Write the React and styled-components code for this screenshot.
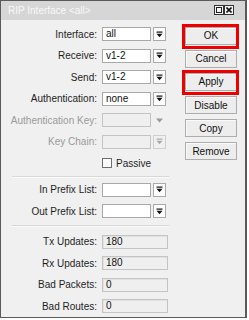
import React from 'react';
import styled, { createGlobalStyle } from 'styled-components';

const GlobalStyle = createGlobalStyle`
  html, body {
    margin: 0;
    padding: 0;
    background: #ffffff;
  }
  body {
    font-family: "Liberation Sans", Arial, sans-serif;
  }
`;

const Window = styled.div`
  width: 244px;
  height: 316px;
  border: 1px solid #5a5a5a;
  border-right-width: 2px;
  background: #f0f0f0;
  display: flex;
  flex-direction: column;
`;

const TitleBar = styled.div`
  height: 19px;
  background: #d6d6d6;
  display: flex;
  align-items: center;
  padding: 0 11px 0 7px;
  color: #f8f8f8;
  font-size: 10px;
`;

const TitleText = styled.span`
  flex: 1;
`;

const TitleButton = styled.div`
  width: 8px;
  height: 8px;
  border: 1px solid #333;
  background: #f4f4f4;
  display: flex;
  align-items: center;
  justify-content: center;
`;

const Body = styled.div`
  display: flex;
  flex: 1;
`;

const Form = styled.div`
  width: 184px;
  padding-top: 4px;
  display: flex;
  flex-direction: column;
`;

const Row = styled.div`
  height: 21.5px;
  display: flex;
  align-items: center;
`;

const Label = styled.div`
  width: 96px;
  text-align: right;
  font-size: 10px;
  color: ${p => (p.disabled ? '#9a9a9a' : '#1e1e1e')};
  margin-right: 5px;
  white-space: nowrap;
`;

const Field = styled.div`
  box-sizing: border-box;
  width: ${p => (p.wide ? '66px' : '49px')};
  height: 14px;
  border: 1px solid ${p => (p.readOnly || p.disabled ? '#c4c4c4' : '#a8a8a8')};
  background: ${p => (p.readOnly || p.disabled ? '#efefef' : '#ffffff')};
  box-shadow: ${p => (p.readOnly ? 'inset 1px 1px 0 #e2e2e2' : 'none')};
  font-size: 10px;
  line-height: 12px;
  padding-left: 3px;
  color: #111;
`;

const DropButton = styled.div`
  box-sizing: border-box;
  width: 13px;
  height: 14px;
  margin-left: 2px;
  border: 1px solid ${p => (p.disabled ? '#cfcfcf' : '#a9a9a9')};
  background: ${p => (p.disabled ? '#f0f0f0' : '#ffffff')};
  display: flex;
  align-items: center;
  justify-content: center;
`;

const PlainArrow = styled.div`
  width: 13px;
  height: 14px;
  margin-left: 2px;
  display: flex;
  align-items: center;
  justify-content: center;
`;

const CheckRow = styled(Row)`
  padding-left: 101px;
  font-size: 10px;
  color: #1e1e1e;
`;

const CheckBox = styled.div`
  box-sizing: border-box;
  width: 10px;
  height: 10px;
  border: 1px solid #6f6f6f;
  background: #fff;
  margin-right: 4px;
`;

const Separator = styled.div`
  height: 1px;
  margin: ${p => p.top} 16px ${p => p.bottom} 11px;
  background: #d8d8d8;
  border-bottom: 1px solid #fbfbfb;
`;

const ButtonColumn = styled.div`
  width: 52px;
  padding-top: 7px;
  display: flex;
  flex-direction: column;
  gap: 5.2px;
`;

const Button = styled.div`
  position: relative;
  box-sizing: border-box;
  height: 18px;
  border: 1px solid #adadad;
  background: #ededed;
  box-shadow: inset 1px 1px 0 #fafafa;
  font-size: 10px;
  color: #111;
  display: flex;
  align-items: center;
  justify-content: center;

  ${p =>
    p.marked &&
    `
    &::after {
      content: '';
      position: absolute;
      top: -4px;
      bottom: -5px;
      left: -4px;
      right: -3px;
      border: 3px solid #ee0000;
    }
  `}
`;

const DropIcon = ({ color = '#111' }) => (
  <svg width="7" height="7" viewBox="0 0 7 7">
    <rect x="0.5" y="0.5" width="6" height="1.2" fill={color} />
    <path d="M0.5 2.8 H6.5 L3.5 6.3 Z" fill={color} />
  </svg>
);

const Combo = ({ label, value }) => (
  <Row>
    <Label>{label}:</Label>
    <Field>{value}</Field>
    <DropButton>
      <DropIcon />
    </DropButton>
  </Row>
);

const Stat = ({ label, value }) => (
  <Row>
    <Label>{label}:</Label>
    <Field wide readOnly>
      {value}
    </Field>
  </Row>
);

export default function App() {
  return (
    <>
      <GlobalStyle />
      <Window>
        <TitleBar>
          <TitleText>RIP Interface &lt;all&gt;</TitleText>
          <TitleButton>
            <svg width="6" height="6" viewBox="0 0 6 6">
              <rect x="0.5" y="0.5" width="5" height="5" fill="none" stroke="#222" strokeWidth="1" />
            </svg>
          </TitleButton>
          <TitleButton>
            <svg width="6" height="6" viewBox="0 0 6 6">
              <path d="M0.5 0.5 L5.5 5.5 M5.5 0.5 L0.5 5.5" stroke="#111" strokeWidth="1.6" />
            </svg>
          </TitleButton>
        </TitleBar>
        <Body>
          <Form>
            <Combo label="Interface" value="all" />
            <Combo label="Receive" value="v1-2" />
            <Combo label="Send" value="v1-2" />
            <Combo label="Authentication" value="none" />
            <Row>
              <Label disabled>Authentication Key:</Label>
              <Field disabled />
              <PlainArrow>
                <svg width="7" height="5" viewBox="0 0 7 5">
                  <path d="M0 0.5 H7 L3.5 4.5 Z" fill="#9a9a9a" />
                </svg>
              </PlainArrow>
            </Row>
            <Row>
              <Label disabled>Key Chain:</Label>
              <Field disabled />
              <DropButton disabled>
                <DropIcon color="#a8a8a8" />
              </DropButton>
            </Row>
            <CheckRow>
              <CheckBox />
              Passive
            </CheckRow>
            <Separator top="1.5px" bottom="1.5px" />
            <Combo label="In Prefix List" value="" />
            <Combo label="Out Prefix List" value="" />
            <Separator top="3px" bottom="4px" />
            <Stat label="Tx Updates" value="180" />
            <Stat label="Rx Updates" value="180" />
            <Stat label="Bad Packets" value="0" />
            <Stat label="Bad Routes" value="0" />
          </Form>
          <ButtonColumn>
            <Button marked>OK</Button>
            <Button>Cancel</Button>
            <Button marked>Apply</Button>
            <Button>Disable</Button>
            <Button>Copy</Button>
            <Button>Remove</Button>
          </ButtonColumn>
        </Body>
      </Window>
    </>
  );
}
